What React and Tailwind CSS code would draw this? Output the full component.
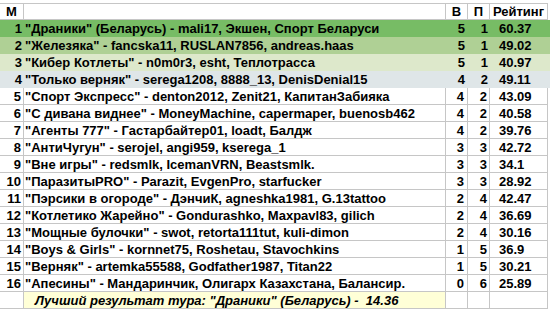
const rows = [
  { n: 1, name: '"Драники" (Беларусь) - mali17, Экшен, Спорт Беларуси', w: 5, l: 1, r: '60.37', bg: 'bg-[#77bc65]' },
  { n: 2, name: '"Железяка" - fancska11, RUSLAN7856, andreas.haas', w: 5, l: 1, r: '49.02', bg: 'bg-[#afd095]' },
  { n: 3, name: '"Кибер Котлеты" - n0m0r3, esht, Теплотрасса', w: 5, l: 1, r: '40.97', bg: 'bg-[#dde8cb]' },
  { n: 4, name: '"Только верняк" - serega1208, 8888_13, DenisDenial15', w: 4, l: 2, r: '49.11', bg: 'bg-[#dfe6e8]' },
  { n: 5, name: '"Спорт Экспресс" - denton2012, Zenit21, КапитанЗабияка', w: 4, l: 2, r: '43.09' },
  { n: 6, name: '"С дивана виднее" - MoneyMachine, capermaper, buenosb462', w: 4, l: 2, r: '40.58' },
  { n: 7, name: '"Агенты 777" - Гастарбайтер01, loadt, Балдж', w: 4, l: 2, r: '39.76' },
  { n: 8, name: '"АнтиЧугун" - serojel, angi959, kserega_1', w: 3, l: 3, r: '42.72' },
  { n: 9, name: '"Вне игры" - redsmlk, IcemanVRN, Beastsmlk.', w: 3, l: 3, r: '34.1' },
  { n: 10, name: '"ПаразитыPRO" - Parazit, EvgenPro, starfucker', w: 3, l: 3, r: '28.92' },
  { n: 11, name: '"Пэрсики в огороде" - ДэнчиК, agneshka1981, G.13tattoo', w: 2, l: 4, r: '42.47' },
  { n: 12, name: '"Котлетико Жарейно" - Gondurashko, Maxpavl83, gilich', w: 2, l: 4, r: '36.69' },
  { n: 13, name: '"Мощные булочки" - swot, retorta111tut, kuli-dimon', w: 2, l: 4, r: '30.16' },
  { n: 14, name: '"Boys & Girls" - kornnet75, Roshetau, Stavochkins', w: 1, l: 5, r: '36.9' },
  { n: 15, name: '"Верняк" - artemka55588, Godfather1987, Titan22', w: 1, l: 5, r: '30.21' },
  { n: 16, name: '"Апесины" - Мандаринчик, Олигарх Казахстана, Балансир.', w: 0, l: 6, r: '25.89' },
]

const line = 'border-[#c6c6c6]'

function Row({ n, name, w, l, r, bg }) {
  // coloured rows have no grid lines and run the full width
  const cell = bg ? '' : `border-r ${line}`
  return (
    <div className={`flex h-[17px] items-center ${bg ? bg + ' w-full' : `w-[548px] border-b ${line}`}`}>
      <div className={`w-[24px] h-full flex items-center justify-end pr-[2px] ${cell}`}>{n}</div>
      <div className={`w-[422px] h-full flex items-center pl-[1px] whitespace-nowrap ${cell}`}>{name}</div>
      <div className={`w-[22px] h-full flex items-center justify-end pr-[3px] ${cell}`}>{w}</div>
      <div className={`w-[22px] h-full flex items-center justify-end pr-[2px] ${cell}`}>{l}</div>
      <div className={`w-[58px] h-full flex items-center pl-[9px] ${cell}`}>{r}</div>
    </div>
  )
}

export default function App() {
  return (
    <div className="w-[550px] h-[309px] bg-white pt-[3px] overflow-hidden text-[13px] font-bold text-black leading-none" style={{ fontFamily: '"Liberation Sans", Arial, sans-serif' }}>
      <div className={`flex h-[17px] w-[548px] border-t border-b ${line} items-center`}>
        <div className={`w-[24px] h-full flex items-center justify-center border-r ${line}`}>М</div>
        <div className={`w-[422px] h-full border-r ${line}`} />
        <div className={`w-[22px] h-full flex items-center justify-center border-r ${line}`}>В</div>
        <div className={`w-[22px] h-full flex items-center justify-center border-r ${line}`}>П</div>
        <div className={`w-[58px] h-full flex items-center justify-center border-r ${line}`}>Рейтинг</div>
      </div>
      {rows.map(row => <Row key={row.n} {...row} />)}
      <div className={`flex h-[17px] w-[548px] border-b ${line}`}>
        <div className={`w-[24px] h-full border-r ${line}`} />
        <div className={`w-[422px] h-full flex items-center pl-[11px] bg-[#ffffd7] italic whitespace-pre border-r ${line}`}>
          {'Лучший результат тура: "Драники" (Беларусь) -  14.36'}
        </div>
        <div className={`w-[22px] h-full border-r ${line}`} />
        <div className={`w-[22px] h-full border-r ${line}`} />
        <div className={`w-[58px] h-full border-r ${line}`} />
      </div>
    </div>
  )
}
